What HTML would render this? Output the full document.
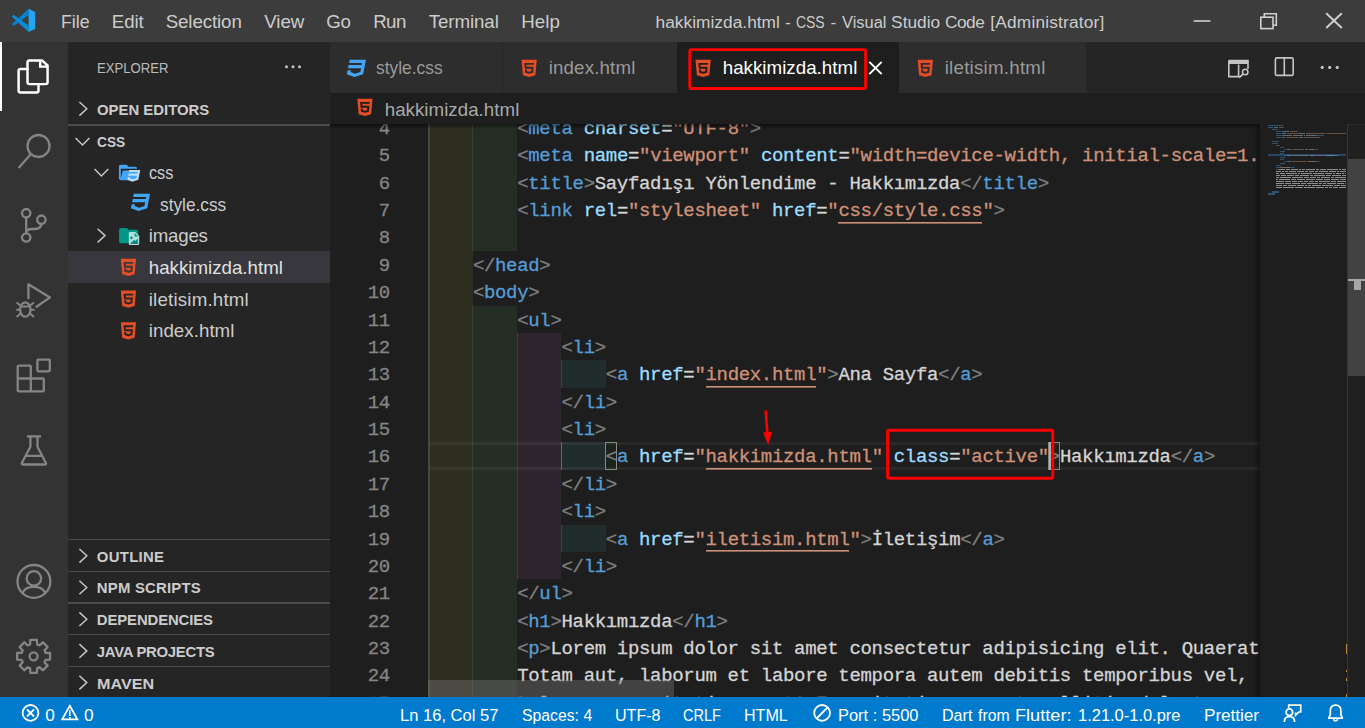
<!DOCTYPE html>
<html lang="tr">
<head>
<meta charset="UTF-8">
<title>hakkimizda.html - CSS - Visual Studio Code [Administrator]</title>
<style>
*{box-sizing:border-box;margin:0;padding:0}
html,body{width:1365px;height:728px;overflow:hidden;background:#1e1e1e}
body{position:relative;font-family:'Liberation Sans',sans-serif;-webkit-font-smoothing:antialiased}
.abs{position:absolute}
.t{position:absolute;white-space:pre;line-height:normal;z-index:8}
#titlebar{left:0;top:0;width:1365px;height:42px;background:#3c3c3c}
#activity{left:0;top:42px;width:68px;height:655px;background:#333333}
#sidebar{left:68px;top:42px;width:262px;height:655px;background:#252526}
#tabs{left:330px;top:42px;width:1035px;height:50.5px;background:#252526}
.tab{position:absolute;top:0;height:50.5px;background:#2d2d2d}
#crumbs{left:330px;top:92.5px;width:1035px;height:31.5px;background:#1e1e1e;z-index:3}
#editor{left:330px;top:124px;width:1035px;height:573px;background:#1e1e1e;overflow:hidden}
#codeclip{position:absolute;left:0;top:0;width:929.5px;height:573px;overflow:hidden}
#status{left:0;top:697px;width:1365px;height:31px;background:#007acc;z-index:6}
.sep{position:absolute;left:68px;width:262px;height:1.4px;background:#4b4b4b}
.ib{position:absolute}
.mm{position:absolute;height:1.5px}
.ln{position:absolute;left:0;width:59.8px;text-align:right;font:19px/27.37px 'Liberation Mono',monospace;letter-spacing:-0.327px;white-space:pre;-webkit-text-stroke:0.3px}
.cl{position:absolute;font:19px/27.37px 'Liberation Mono',monospace;letter-spacing:-0.327px;white-space:pre;height:27.37px;-webkit-text-stroke:0.3px;z-index:2}
.cl span{display:inline-block;height:27.37px;vertical-align:top}
.cl .u{background:linear-gradient(currentColor,currentColor) 0 23.5px/100% 1.6px no-repeat}
svg{position:absolute;overflow:visible}
</style>
</head>
<body>
<div id="titlebar" class="abs"></div>
<div id="activity" class="abs"></div>
<div id="sidebar" class="abs"></div>
<div class="abs" style="left:68px;top:251px;width:262px;height:32px;background:#37373d"></div>
<div class="abs" style="left:0;top:42.4px;width:2.4px;height:68.6px;background:#fff"></div>
<div class="sep" style="top:124.3px"></div>
<div class="sep" style="top:539px"></div>
<div class="sep" style="top:570.7px"></div>
<div class="sep" style="top:602.3px"></div>
<div class="sep" style="top:634px"></div>
<div class="sep" style="top:665.7px"></div>
<div id="tabs" class="abs">
  <div class="tab" style="left:0;width:172px"></div>
  <div class="tab" style="left:173px;width:173.5px"></div>
  <div class="tab" style="left:347px;width:221.5px;background:#1e1e1e"></div>
  <div class="tab" style="left:569px;width:186.5px"></div>
</div>
<div id="crumbs" class="abs"></div>
<div id="editor" class="abs">
 <div id="codeclip">
<div class="ib" style="left:98.60px;top:-9.95px;width:44.30px;height:602.14px;background:#2e2e20"></div>
<div class="ib" style="left:142.90px;top:-9.95px;width:44.30px;height:136.85px;background:#252e25"></div>
<div class="ib" style="left:142.90px;top:181.64px;width:44.30px;height:410.55px;background:#252e25"></div>
<div class="ib" style="left:187.20px;top:209.01px;width:44.30px;height:246.33px;background:#2e252e"></div>
<div class="ib" style="left:231.50px;top:236.38px;width:44.30px;height:27.37px;background:#212c2c"></div>
<div class="ib" style="left:231.50px;top:318.49px;width:44.30px;height:27.37px;background:#212c2c"></div>
<div class="ib" style="left:231.50px;top:400.60px;width:44.30px;height:27.37px;background:#212c2c"></div>
<div class="ib" style="left:97.90px;top:-9.95px;width:2px;height:602.14px;background:#46463b"></div>
<div class="ib" style="left:142.20px;top:-9.95px;width:1.3px;height:136.85px;background:#3c403a"></div>
<div class="ib" style="left:142.20px;top:181.64px;width:1.3px;height:410.55px;background:#3c403a"></div>
<div class="ib" style="left:186.50px;top:209.01px;width:1.3px;height:246.33px;background:#3c403a"></div>
<div class="ib" style="left:231.00px;top:236.38px;width:1px;height:27.37px;background:#3d4444"></div>
<div class="ib" style="left:231.00px;top:318.49px;width:1.4px;height:27.37px;background:#626a6a"></div>
<div class="ib" style="left:231.00px;top:400.60px;width:1px;height:27.37px;background:#3d4444"></div>
<div class="ib" style="left:98.60px;top:318.49px;width:840px;height:27.37px;border-top:3px solid rgba(255,255,255,0.05);border-bottom:3px solid rgba(255,255,255,0.05)"></div>
<div class="ib" style="left:275.30px;top:318.49px;width:11.77px;height:27.37px;border:1px solid #888888;background:rgba(0,100,0,0.1)"></div>
<div class="ib" style="left:718.30px;top:318.49px;width:11.77px;height:27.37px;border:1px solid #888888;background:rgba(0,100,0,0.1)"></div>
<div class="ib" style="left:718.50px;top:318.49px;width:2.6px;height:27.37px;background:#aeafad;z-index:3"></div>
<div class="ln" style="top:-8.00px;color:#858585">4</div>
<div class="cl" style="left:187.20px;top:-8.00px"><span style="color:#808080">&lt;</span><span style="color:#569cd6">meta</span><span style="color:#d4d4d4"> </span><span style="color:#9cdcfe">charset</span><span style="color:#d4d4d4">=</span><span style="color:#ce9178">&quot;</span><span style="color:#ce9178">UTF-8</span><span style="color:#ce9178">&quot;</span><span style="color:#808080">&gt;</span></div>
<div class="ln" style="top:19.37px;color:#858585">5</div>
<div class="cl" style="left:187.20px;top:19.37px"><span style="color:#808080">&lt;</span><span style="color:#569cd6">meta</span><span style="color:#d4d4d4"> </span><span style="color:#9cdcfe">name</span><span style="color:#d4d4d4">=</span><span style="color:#ce9178">&quot;</span><span style="color:#ce9178">viewport</span><span style="color:#ce9178">&quot;</span><span style="color:#d4d4d4"> </span><span style="color:#9cdcfe">content</span><span style="color:#d4d4d4">=</span><span style="color:#ce9178">&quot;</span><span style="color:#ce9178">width=device-width, initial-scale=1.0</span><span style="color:#ce9178">&quot;</span><span style="color:#808080">&gt;</span></div>
<div class="ln" style="top:46.74px;color:#858585">6</div>
<div class="cl" style="left:187.20px;top:46.74px"><span style="color:#808080">&lt;</span><span style="color:#569cd6">title</span><span style="color:#808080">&gt;</span><span style="color:#d4d4d4">Sayfadışı Yönlendime - Hakkımızda</span><span style="color:#808080">&lt;/</span><span style="color:#569cd6">title</span><span style="color:#808080">&gt;</span></div>
<div class="ln" style="top:74.11px;color:#858585">7</div>
<div class="cl" style="left:187.20px;top:74.11px"><span style="color:#808080">&lt;</span><span style="color:#569cd6">link</span><span style="color:#d4d4d4"> </span><span style="color:#9cdcfe">rel</span><span style="color:#d4d4d4">=</span><span style="color:#ce9178">&quot;</span><span style="color:#ce9178">stylesheet</span><span style="color:#ce9178">&quot;</span><span style="color:#d4d4d4"> </span><span style="color:#9cdcfe">href</span><span style="color:#d4d4d4">=</span><span style="color:#ce9178">&quot;</span><span class="u" style="color:#ce9178">css/style.css</span><span style="color:#ce9178">&quot;</span><span style="color:#808080">&gt;</span></div>
<div class="ln" style="top:101.48px;color:#858585">8</div>
<div class="ln" style="top:128.85px;color:#858585">9</div>
<div class="cl" style="left:142.90px;top:128.85px"><span style="color:#808080">&lt;/</span><span style="color:#569cd6">head</span><span style="color:#808080">&gt;</span></div>
<div class="ln" style="top:156.22px;color:#858585">10</div>
<div class="cl" style="left:142.90px;top:156.22px"><span style="color:#808080">&lt;</span><span style="color:#569cd6">body</span><span style="color:#808080">&gt;</span></div>
<div class="ln" style="top:183.59px;color:#858585">11</div>
<div class="cl" style="left:187.20px;top:183.59px"><span style="color:#808080">&lt;</span><span style="color:#569cd6">ul</span><span style="color:#808080">&gt;</span></div>
<div class="ln" style="top:210.96px;color:#858585">12</div>
<div class="cl" style="left:231.50px;top:210.96px"><span style="color:#808080">&lt;</span><span style="color:#569cd6">li</span><span style="color:#808080">&gt;</span></div>
<div class="ln" style="top:238.33px;color:#858585">13</div>
<div class="cl" style="left:275.80px;top:238.33px"><span style="color:#808080">&lt;</span><span style="color:#569cd6">a</span><span style="color:#d4d4d4"> </span><span style="color:#9cdcfe">href</span><span style="color:#d4d4d4">=</span><span style="color:#ce9178">&quot;</span><span class="u" style="color:#ce9178">index.html</span><span style="color:#ce9178">&quot;</span><span style="color:#808080">&gt;</span><span style="color:#d4d4d4">Ana Sayfa</span><span style="color:#808080">&lt;/</span><span style="color:#569cd6">a</span><span style="color:#808080">&gt;</span></div>
<div class="ln" style="top:265.70px;color:#858585">14</div>
<div class="cl" style="left:231.50px;top:265.70px"><span style="color:#808080">&lt;/</span><span style="color:#569cd6">li</span><span style="color:#808080">&gt;</span></div>
<div class="ln" style="top:293.07px;color:#858585">15</div>
<div class="cl" style="left:231.50px;top:293.07px"><span style="color:#808080">&lt;</span><span style="color:#569cd6">li</span><span style="color:#808080">&gt;</span></div>
<div class="ln" style="top:320.44px;color:#858585">16</div>
<div class="cl" style="left:275.80px;top:320.44px"><span style="color:#808080">&lt;</span><span style="color:#569cd6">a</span><span style="color:#d4d4d4"> </span><span style="color:#9cdcfe">href</span><span style="color:#d4d4d4">=</span><span style="color:#ce9178">&quot;</span><span class="u" style="color:#ce9178">hakkimizda.html</span><span style="color:#ce9178">&quot;</span><span style="color:#d4d4d4"> </span><span style="color:#9cdcfe">class</span><span style="color:#d4d4d4">=</span><span style="color:#ce9178">&quot;</span><span style="color:#ce9178">active</span><span style="color:#ce9178">&quot;</span><span style="color:#808080">&gt;</span><span style="color:#d4d4d4">Hakkımızda</span><span style="color:#808080">&lt;/</span><span style="color:#569cd6">a</span><span style="color:#808080">&gt;</span></div>
<div class="ln" style="top:347.81px;color:#858585">17</div>
<div class="cl" style="left:231.50px;top:347.81px"><span style="color:#808080">&lt;/</span><span style="color:#569cd6">li</span><span style="color:#808080">&gt;</span></div>
<div class="ln" style="top:375.18px;color:#858585">18</div>
<div class="cl" style="left:231.50px;top:375.18px"><span style="color:#808080">&lt;</span><span style="color:#569cd6">li</span><span style="color:#808080">&gt;</span></div>
<div class="ln" style="top:402.55px;color:#858585">19</div>
<div class="cl" style="left:275.80px;top:402.55px"><span style="color:#808080">&lt;</span><span style="color:#569cd6">a</span><span style="color:#d4d4d4"> </span><span style="color:#9cdcfe">href</span><span style="color:#d4d4d4">=</span><span style="color:#ce9178">&quot;</span><span class="u" style="color:#ce9178">iletisim.html</span><span style="color:#ce9178">&quot;</span><span style="color:#808080">&gt;</span><span style="color:#d4d4d4">İletişim</span><span style="color:#808080">&lt;/</span><span style="color:#569cd6">a</span><span style="color:#808080">&gt;</span></div>
<div class="ln" style="top:429.92px;color:#858585">20</div>
<div class="cl" style="left:231.50px;top:429.92px"><span style="color:#808080">&lt;/</span><span style="color:#569cd6">li</span><span style="color:#808080">&gt;</span></div>
<div class="ln" style="top:457.29px;color:#858585">21</div>
<div class="cl" style="left:187.20px;top:457.29px"><span style="color:#808080">&lt;/</span><span style="color:#569cd6">ul</span><span style="color:#808080">&gt;</span></div>
<div class="ln" style="top:484.66px;color:#858585">22</div>
<div class="cl" style="left:187.20px;top:484.66px"><span style="color:#808080">&lt;</span><span style="color:#569cd6">h1</span><span style="color:#808080">&gt;</span><span style="color:#d4d4d4">Hakkımızda</span><span style="color:#808080">&lt;/</span><span style="color:#569cd6">h1</span><span style="color:#808080">&gt;</span></div>
<div class="ln" style="top:512.03px;color:#858585">23</div>
<div class="cl" style="left:187.20px;top:512.03px"><span style="color:#808080">&lt;</span><span style="color:#569cd6">p</span><span style="color:#808080">&gt;</span><span style="color:#d4d4d4">Lorem ipsum dolor sit amet consectetur adipisicing elit. Quaerat</span></div>
<div class="ln" style="top:539.40px;color:#858585">24</div>
<div class="cl" style="left:187.20px;top:539.40px"><span style="color:#d4d4d4">Totam aut, laborum et labore tempora autem debitis temporibus vel,</span></div>
<div class="ln" style="top:566.77px;color:#858585">25</div>
<div class="cl" style="left:187.20px;top:566.77px"><span style="color:#d4d4d4">Dolorum exercitationem at! Exercitationem amet mollitia delectus</span></div>
 </div>
 <div class="abs" style="left:923.5px;top:0;width:6px;height:573px;background:linear-gradient(90deg,rgba(0,0,0,0),rgba(0,0,0,.38))"></div>
 <div class="abs" style="left:929.5px;top:0;width:87.5px;height:573px;background:#1e1e1e"></div>
 <div class="abs" style="left:938px;top:30.2px;width:78px;height:2.2px;background:#264f78;opacity:.85"></div>
<div class="mm" style="left:938.0px;top:0.50px;width:15.0px;background:#569cd6;opacity:0.42"></div>
<div class="mm" style="left:938.0px;top:2.52px;width:5.0px;background:#569cd6;opacity:0.42"></div>
<div class="mm" style="left:944.0px;top:2.52px;width:4.0px;background:#9cdcfe;opacity:0.42"></div>
<div class="mm" style="left:949.0px;top:2.52px;width:4.0px;background:#ce9178;opacity:0.42"></div>
<div class="mm" style="left:953.0px;top:2.52px;width:1.0px;background:#569cd6;opacity:0.42"></div>
<div class="mm" style="left:942.0px;top:4.53px;width:6.0px;background:#569cd6;opacity:0.42"></div>
<div class="mm" style="left:946.0px;top:6.54px;width:5.0px;background:#569cd6;opacity:0.42"></div>
<div class="mm" style="left:952.0px;top:6.54px;width:7.0px;background:#9cdcfe;opacity:0.42"></div>
<div class="mm" style="left:960.0px;top:6.54px;width:7.0px;background:#ce9178;opacity:0.42"></div>
<div class="mm" style="left:967.0px;top:6.54px;width:1.0px;background:#569cd6;opacity:0.42"></div>
<div class="mm" style="left:946.0px;top:8.56px;width:5.0px;background:#569cd6;opacity:0.42"></div>
<div class="mm" style="left:952.0px;top:8.56px;width:4.0px;background:#9cdcfe;opacity:0.42"></div>
<div class="mm" style="left:957.0px;top:8.56px;width:10.0px;background:#ce9178;opacity:0.42"></div>
<div class="mm" style="left:968.0px;top:8.56px;width:7.0px;background:#9cdcfe;opacity:0.42"></div>
<div class="mm" style="left:976.0px;top:8.56px;width:20.0px;background:#ce9178;opacity:0.42"></div>
<div class="mm" style="left:997.0px;top:8.56px;width:19.0px;background:#ce9178;opacity:0.42"></div>
<div class="mm" style="left:946.0px;top:10.57px;width:7.0px;background:#569cd6;opacity:0.42"></div>
<div class="mm" style="left:953.0px;top:10.57px;width:9.0px;background:#d4d4d4;opacity:0.42"></div>
<div class="mm" style="left:963.0px;top:10.57px;width:10.0px;background:#d4d4d4;opacity:0.42"></div>
<div class="mm" style="left:974.0px;top:10.57px;width:1.0px;background:#d4d4d4;opacity:0.42"></div>
<div class="mm" style="left:976.0px;top:10.57px;width:10.0px;background:#d4d4d4;opacity:0.42"></div>
<div class="mm" style="left:986.0px;top:10.57px;width:8.0px;background:#569cd6;opacity:0.42"></div>
<div class="mm" style="left:946.0px;top:12.59px;width:5.0px;background:#569cd6;opacity:0.42"></div>
<div class="mm" style="left:952.0px;top:12.59px;width:3.0px;background:#9cdcfe;opacity:0.42"></div>
<div class="mm" style="left:956.0px;top:12.59px;width:12.0px;background:#ce9178;opacity:0.42"></div>
<div class="mm" style="left:969.0px;top:12.59px;width:4.0px;background:#9cdcfe;opacity:0.42"></div>
<div class="mm" style="left:974.0px;top:12.59px;width:15.0px;background:#ce9178;opacity:0.42"></div>
<div class="mm" style="left:989.0px;top:12.59px;width:1.0px;background:#569cd6;opacity:0.42"></div>
<div class="mm" style="left:942.0px;top:16.62px;width:7.0px;background:#569cd6;opacity:0.42"></div>
<div class="mm" style="left:942.0px;top:18.63px;width:6.0px;background:#569cd6;opacity:0.42"></div>
<div class="mm" style="left:946.0px;top:20.65px;width:4.0px;background:#569cd6;opacity:0.42"></div>
<div class="mm" style="left:950.0px;top:22.66px;width:4.0px;background:#569cd6;opacity:0.42"></div>
<div class="mm" style="left:954.0px;top:24.68px;width:2.0px;background:#569cd6;opacity:0.42"></div>
<div class="mm" style="left:957.0px;top:24.68px;width:4.0px;background:#9cdcfe;opacity:0.42"></div>
<div class="mm" style="left:962.0px;top:24.68px;width:12.0px;background:#ce9178;opacity:0.42"></div>
<div class="mm" style="left:975.0px;top:24.68px;width:3.0px;background:#d4d4d4;opacity:0.42"></div>
<div class="mm" style="left:979.0px;top:24.68px;width:5.0px;background:#d4d4d4;opacity:0.42"></div>
<div class="mm" style="left:984.0px;top:24.68px;width:4.0px;background:#569cd6;opacity:0.42"></div>
<div class="mm" style="left:950.0px;top:26.69px;width:5.0px;background:#569cd6;opacity:0.42"></div>
<div class="mm" style="left:950.0px;top:28.71px;width:4.0px;background:#569cd6;opacity:0.42"></div>
<div class="mm" style="left:954.0px;top:30.72px;width:2.0px;background:#569cd6;opacity:0.42"></div>
<div class="mm" style="left:957.0px;top:30.72px;width:4.0px;background:#9cdcfe;opacity:0.42"></div>
<div class="mm" style="left:962.0px;top:30.72px;width:17.0px;background:#ce9178;opacity:0.42"></div>
<div class="mm" style="left:980.0px;top:30.72px;width:5.0px;background:#9cdcfe;opacity:0.42"></div>
<div class="mm" style="left:986.0px;top:30.72px;width:8.0px;background:#ce9178;opacity:0.42"></div>
<div class="mm" style="left:995.0px;top:30.72px;width:10.0px;background:#d4d4d4;opacity:0.42"></div>
<div class="mm" style="left:1005.0px;top:30.72px;width:4.0px;background:#569cd6;opacity:0.42"></div>
<div class="mm" style="left:950.0px;top:32.74px;width:5.0px;background:#569cd6;opacity:0.42"></div>
<div class="mm" style="left:950.0px;top:34.75px;width:4.0px;background:#569cd6;opacity:0.42"></div>
<div class="mm" style="left:954.0px;top:36.77px;width:2.0px;background:#569cd6;opacity:0.42"></div>
<div class="mm" style="left:957.0px;top:36.77px;width:4.0px;background:#9cdcfe;opacity:0.42"></div>
<div class="mm" style="left:962.0px;top:36.77px;width:15.0px;background:#ce9178;opacity:0.42"></div>
<div class="mm" style="left:978.0px;top:36.77px;width:8.0px;background:#d4d4d4;opacity:0.42"></div>
<div class="mm" style="left:986.0px;top:36.77px;width:4.0px;background:#569cd6;opacity:0.42"></div>
<div class="mm" style="left:950.0px;top:38.78px;width:5.0px;background:#569cd6;opacity:0.42"></div>
<div class="mm" style="left:946.0px;top:40.80px;width:5.0px;background:#569cd6;opacity:0.42"></div>
<div class="mm" style="left:946.0px;top:42.81px;width:4.0px;background:#569cd6;opacity:0.42"></div>
<div class="mm" style="left:950.0px;top:42.81px;width:10.0px;background:#d4d4d4;opacity:0.42"></div>
<div class="mm" style="left:960.0px;top:42.81px;width:5.0px;background:#569cd6;opacity:0.42"></div>
<div class="mm" style="left:946.0px;top:44.83px;width:3.0px;background:#569cd6;opacity:0.42"></div>
<div class="mm" style="left:949.0px;top:44.83px;width:6.0px;background:#d4d4d4;opacity:0.62"></div>
<div class="mm" style="left:956.0px;top:44.83px;width:4.0px;background:#d4d4d4;opacity:0.62"></div>
<div class="mm" style="left:961.0px;top:44.83px;width:7.0px;background:#d4d4d4;opacity:0.62"></div>
<div class="mm" style="left:969.0px;top:44.83px;width:2.0px;background:#d4d4d4;opacity:0.62"></div>
<div class="mm" style="left:972.0px;top:44.83px;width:3.0px;background:#d4d4d4;opacity:0.62"></div>
<div class="mm" style="left:976.0px;top:44.83px;width:9.0px;background:#d4d4d4;opacity:0.62"></div>
<div class="mm" style="left:986.0px;top:44.83px;width:3.0px;background:#d4d4d4;opacity:0.62"></div>
<div class="mm" style="left:990.0px;top:44.83px;width:6.0px;background:#d4d4d4;opacity:0.62"></div>
<div class="mm" style="left:997.0px;top:44.83px;width:11.0px;background:#d4d4d4;opacity:0.62"></div>
<div class="mm" style="left:1009.0px;top:44.83px;width:2.0px;background:#d4d4d4;opacity:0.62"></div>
<div class="mm" style="left:1012.0px;top:44.83px;width:4.0px;background:#d4d4d4;opacity:0.62"></div>
<div class="mm" style="left:946.0px;top:46.84px;width:5.0px;background:#d4d4d4;opacity:0.62"></div>
<div class="mm" style="left:952.0px;top:46.84px;width:2.0px;background:#d4d4d4;opacity:0.62"></div>
<div class="mm" style="left:955.0px;top:46.84px;width:3.0px;background:#d4d4d4;opacity:0.62"></div>
<div class="mm" style="left:959.0px;top:46.84px;width:7.0px;background:#d4d4d4;opacity:0.62"></div>
<div class="mm" style="left:967.0px;top:46.84px;width:7.0px;background:#d4d4d4;opacity:0.62"></div>
<div class="mm" style="left:975.0px;top:46.84px;width:3.0px;background:#d4d4d4;opacity:0.62"></div>
<div class="mm" style="left:979.0px;top:46.84px;width:5.0px;background:#d4d4d4;opacity:0.62"></div>
<div class="mm" style="left:985.0px;top:46.84px;width:3.0px;background:#d4d4d4;opacity:0.62"></div>
<div class="mm" style="left:989.0px;top:46.84px;width:9.0px;background:#d4d4d4;opacity:0.62"></div>
<div class="mm" style="left:999.0px;top:46.84px;width:7.0px;background:#d4d4d4;opacity:0.62"></div>
<div class="mm" style="left:1007.0px;top:46.84px;width:2.0px;background:#d4d4d4;opacity:0.62"></div>
<div class="mm" style="left:1010.0px;top:46.84px;width:6.0px;background:#d4d4d4;opacity:0.62"></div>
<div class="mm" style="left:946.0px;top:48.86px;width:3.0px;background:#d4d4d4;opacity:0.62"></div>
<div class="mm" style="left:950.0px;top:48.86px;width:5.0px;background:#d4d4d4;opacity:0.62"></div>
<div class="mm" style="left:956.0px;top:48.86px;width:11.0px;background:#d4d4d4;opacity:0.62"></div>
<div class="mm" style="left:968.0px;top:48.86px;width:2.0px;background:#d4d4d4;opacity:0.62"></div>
<div class="mm" style="left:971.0px;top:48.86px;width:11.0px;background:#d4d4d4;opacity:0.62"></div>
<div class="mm" style="left:983.0px;top:48.86px;width:11.0px;background:#d4d4d4;opacity:0.62"></div>
<div class="mm" style="left:995.0px;top:48.86px;width:7.0px;background:#d4d4d4;opacity:0.62"></div>
<div class="mm" style="left:1003.0px;top:48.86px;width:2.0px;background:#d4d4d4;opacity:0.62"></div>
<div class="mm" style="left:1006.0px;top:48.86px;width:5.0px;background:#d4d4d4;opacity:0.62"></div>
<div class="mm" style="left:1012.0px;top:48.86px;width:2.0px;background:#d4d4d4;opacity:0.62"></div>
<div class="mm" style="left:1015.0px;top:48.86px;width:1.0px;background:#d4d4d4;opacity:0.62"></div>
<div class="mm" style="left:946.0px;top:50.88px;width:4.0px;background:#d4d4d4;opacity:0.62"></div>
<div class="mm" style="left:951.0px;top:50.88px;width:5.0px;background:#d4d4d4;opacity:0.62"></div>
<div class="mm" style="left:957.0px;top:50.88px;width:7.0px;background:#d4d4d4;opacity:0.62"></div>
<div class="mm" style="left:965.0px;top:50.88px;width:4.0px;background:#d4d4d4;opacity:0.62"></div>
<div class="mm" style="left:970.0px;top:50.88px;width:9.0px;background:#d4d4d4;opacity:0.62"></div>
<div class="mm" style="left:980.0px;top:50.88px;width:3.0px;background:#d4d4d4;opacity:0.62"></div>
<div class="mm" style="left:984.0px;top:50.88px;width:11.0px;background:#d4d4d4;opacity:0.62"></div>
<div class="mm" style="left:996.0px;top:50.88px;width:5.0px;background:#d4d4d4;opacity:0.62"></div>
<div class="mm" style="left:1002.0px;top:50.88px;width:9.0px;background:#d4d4d4;opacity:0.62"></div>
<div class="mm" style="left:1012.0px;top:50.88px;width:4.0px;background:#d4d4d4;opacity:0.62"></div>
<div class="mm" style="left:946.0px;top:52.89px;width:3.0px;background:#d4d4d4;opacity:0.62"></div>
<div class="mm" style="left:950.0px;top:52.89px;width:11.0px;background:#d4d4d4;opacity:0.62"></div>
<div class="mm" style="left:962.0px;top:52.89px;width:11.0px;background:#d4d4d4;opacity:0.62"></div>
<div class="mm" style="left:974.0px;top:52.89px;width:5.0px;background:#d4d4d4;opacity:0.62"></div>
<div class="mm" style="left:980.0px;top:52.89px;width:6.0px;background:#d4d4d4;opacity:0.62"></div>
<div class="mm" style="left:987.0px;top:52.89px;width:3.0px;background:#d4d4d4;opacity:0.62"></div>
<div class="mm" style="left:991.0px;top:52.89px;width:9.0px;background:#d4d4d4;opacity:0.62"></div>
<div class="mm" style="left:1001.0px;top:52.89px;width:3.0px;background:#d4d4d4;opacity:0.62"></div>
<div class="mm" style="left:1005.0px;top:52.89px;width:11.0px;background:#d4d4d4;opacity:0.62"></div>
<div class="mm" style="left:946.0px;top:54.91px;width:2.0px;background:#d4d4d4;opacity:0.62"></div>
<div class="mm" style="left:949.0px;top:54.91px;width:11.0px;background:#d4d4d4;opacity:0.62"></div>
<div class="mm" style="left:961.0px;top:54.91px;width:5.0px;background:#d4d4d4;opacity:0.62"></div>
<div class="mm" style="left:967.0px;top:54.91px;width:8.0px;background:#d4d4d4;opacity:0.62"></div>
<div class="mm" style="left:976.0px;top:54.91px;width:9.0px;background:#d4d4d4;opacity:0.62"></div>
<div class="mm" style="left:986.0px;top:54.91px;width:7.0px;background:#d4d4d4;opacity:0.62"></div>
<div class="mm" style="left:994.0px;top:54.91px;width:6.0px;background:#d4d4d4;opacity:0.62"></div>
<div class="mm" style="left:1001.0px;top:54.91px;width:8.0px;background:#d4d4d4;opacity:0.62"></div>
<div class="mm" style="left:1010.0px;top:54.91px;width:6.0px;background:#d4d4d4;opacity:0.62"></div>
<div class="mm" style="left:946.0px;top:56.92px;width:8.0px;background:#d4d4d4;opacity:0.62"></div>
<div class="mm" style="left:955.0px;top:56.92px;width:6.0px;background:#d4d4d4;opacity:0.62"></div>
<div class="mm" style="left:962.0px;top:56.92px;width:5.0px;background:#d4d4d4;opacity:0.62"></div>
<div class="mm" style="left:968.0px;top:56.92px;width:5.0px;background:#d4d4d4;opacity:0.62"></div>
<div class="mm" style="left:974.0px;top:56.92px;width:4.0px;background:#d4d4d4;opacity:0.62"></div>
<div class="mm" style="left:979.0px;top:56.92px;width:5.0px;background:#d4d4d4;opacity:0.62"></div>
<div class="mm" style="left:985.0px;top:56.92px;width:3.0px;background:#d4d4d4;opacity:0.62"></div>
<div class="mm" style="left:989.0px;top:56.92px;width:11.0px;background:#d4d4d4;opacity:0.62"></div>
<div class="mm" style="left:1001.0px;top:56.92px;width:5.0px;background:#d4d4d4;opacity:0.62"></div>
<div class="mm" style="left:1007.0px;top:56.92px;width:9.0px;background:#d4d4d4;opacity:0.62"></div>
<div class="mm" style="left:946.0px;top:58.94px;width:8.0px;background:#d4d4d4;opacity:0.62"></div>
<div class="mm" style="left:955.0px;top:58.94px;width:6.0px;background:#d4d4d4;opacity:0.62"></div>
<div class="mm" style="left:962.0px;top:58.94px;width:8.0px;background:#d4d4d4;opacity:0.62"></div>
<div class="mm" style="left:971.0px;top:58.94px;width:5.0px;background:#d4d4d4;opacity:0.62"></div>
<div class="mm" style="left:977.0px;top:58.94px;width:11.0px;background:#d4d4d4;opacity:0.62"></div>
<div class="mm" style="left:989.0px;top:58.94px;width:3.0px;background:#d4d4d4;opacity:0.62"></div>
<div class="mm" style="left:993.0px;top:58.94px;width:3.0px;background:#d4d4d4;opacity:0.62"></div>
<div class="mm" style="left:997.0px;top:58.94px;width:9.0px;background:#d4d4d4;opacity:0.62"></div>
<div class="mm" style="left:1007.0px;top:58.94px;width:7.0px;background:#d4d4d4;opacity:0.62"></div>
<div class="mm" style="left:1015.0px;top:58.94px;width:1.0px;background:#d4d4d4;opacity:0.62"></div>
<div class="mm" style="left:946.0px;top:60.95px;width:6.0px;background:#d4d4d4;opacity:0.62"></div>
<div class="mm" style="left:953.0px;top:60.95px;width:4.0px;background:#d4d4d4;opacity:0.62"></div>
<div class="mm" style="left:958.0px;top:60.95px;width:8.0px;background:#d4d4d4;opacity:0.62"></div>
<div class="mm" style="left:967.0px;top:60.95px;width:7.0px;background:#d4d4d4;opacity:0.62"></div>
<div class="mm" style="left:975.0px;top:60.95px;width:2.0px;background:#d4d4d4;opacity:0.62"></div>
<div class="mm" style="left:978.0px;top:60.95px;width:3.0px;background:#d4d4d4;opacity:0.62"></div>
<div class="mm" style="left:982.0px;top:60.95px;width:9.0px;background:#d4d4d4;opacity:0.62"></div>
<div class="mm" style="left:992.0px;top:60.95px;width:11.0px;background:#d4d4d4;opacity:0.62"></div>
<div class="mm" style="left:1004.0px;top:60.95px;width:6.0px;background:#d4d4d4;opacity:0.62"></div>
<div class="mm" style="left:1011.0px;top:60.95px;width:5.0px;background:#d4d4d4;opacity:0.62"></div>
<div class="mm" style="left:946.0px;top:62.97px;width:6.0px;background:#d4d4d4;opacity:0.62"></div>
<div class="mm" style="left:953.0px;top:62.97px;width:11.0px;background:#d4d4d4;opacity:0.62"></div>
<div class="mm" style="left:965.0px;top:62.97px;width:8.0px;background:#d4d4d4;opacity:0.62"></div>
<div class="mm" style="left:974.0px;top:62.97px;width:11.0px;background:#d4d4d4;opacity:0.62"></div>
<div class="mm" style="left:986.0px;top:62.97px;width:8.0px;background:#d4d4d4;opacity:0.62"></div>
<div class="mm" style="left:995.0px;top:62.97px;width:3.0px;background:#d4d4d4;opacity:0.62"></div>
<div class="mm" style="left:999.0px;top:62.97px;width:3.0px;background:#d4d4d4;opacity:0.62"></div>
<div class="mm" style="left:1003.0px;top:62.97px;width:5.0px;background:#d4d4d4;opacity:0.62"></div>
<div class="mm" style="left:1009.0px;top:62.97px;width:7.0px;background:#d4d4d4;opacity:0.62"></div>
<div class="mm" style="left:942.0px;top:67.00px;width:7.0px;background:#569cd6;opacity:0.42"></div>
<div class="mm" style="left:938.0px;top:69.01px;width:7.0px;background:#569cd6;opacity:0.42"></div>
 <div class="abs" style="left:1017px;top:0;width:18px;height:573px;background:#202020;border-left:1px solid #363636;border-top:1px solid #2c2c2c"></div>
 <div class="abs" style="left:1017.5px;top:34.5px;width:17.5px;height:217.5px;background:#424242"></div>
 <div class="abs" style="left:1017.5px;top:154.8px;width:17.5px;height:2px;background:#a6a6a6"></div>
 <div class="abs" style="left:1023.7px;top:155px;width:7.7px;height:11px;background:#a6a6a6"></div>
 <div class="abs" style="left:1016px;top:520px;width:1.2px;height:9.6px;background:#b98a45"></div>
 <div class="abs" style="left:1016px;top:546px;width:1.2px;height:2px;background:#b98a45"></div>
 <div class="abs" style="left:1016px;top:554px;width:1.2px;height:3px;background:#b98a45"></div>
 <div class="abs" style="left:1016px;top:570px;width:1.2px;height:3px;background:#b98a45"></div>
 <div class="abs" style="left:98.3px;top:556px;width:245.7px;height:17px;background:rgba(121,121,121,.4);z-index:4"></div>
 <div class="abs" style="left:0;top:0;width:929.5px;height:5px;background:linear-gradient(180deg,rgba(0,0,0,.5),rgba(0,0,0,0));z-index:4"></div>
</div>
<div id="status" class="abs"></div>
<svg width="1365" height="728" viewBox="0 0 1365 728" style="left:0;top:0;z-index:7">
<polygon points="11.80,24.31 28.55,8.70 28.55,15.35 13.81,26.02" fill="#0380d0"/>
<polygon points="11.80,16.49 13.81,14.78 28.55,25.45 28.55,32.10" fill="#0a8ad8"/>
<polygon points="28.55,8.70 35.20,11.88 35.20,28.92 28.55,32.10" fill="#22a6f2"/>
<g stroke="#d0d0d0" stroke-width="1.6" fill="none">
<path d="M1193.6 21 H1210.4"/>
<rect x="1260.8" y="17.2" width="12.2" height="11.4"/>
<path d="M1264.3 17.2 V13.7 H1276.3 V25.3 H1273"/>
<path d="M1326.2 13.2 L1341.8 28 M1341.8 13.2 L1326.2 28" stroke-width="1.9"/>
</g>
<g stroke="#ffffff" stroke-width="2.45" fill="none" stroke-linejoin="round" stroke-linecap="round">
<path d="M27.5 62.4 Q27.5 60.4 29.5 60.4 H42 L47.6 65.5 V82.1 Q47.6 84.1 45.6 84.1 H29.5 Q27.5 84.1 27.5 82.1 Z"/>
<path d="M40.2 60.4 V66.6 H47.6" stroke-linecap="butt" stroke-linejoin="miter"/>
<path d="M27.5 69 H20.6 Q18.6 69 18.6 71 V90.4 Q18.6 92.4 20.6 92.4 H36.5 Q38.5 92.4 38.5 90.4 V84.1"/>
</g>
<g stroke="#858585" stroke-width="2.3" fill="none" stroke-linejoin="round">
<circle cx="38.5" cy="146" r="11"/><path d="M30.9 154 L18.6 168"/>
<circle cx="26.2" cy="213.2" r="4.2"/><circle cx="41.4" cy="219.7" r="4.2"/><circle cx="26.2" cy="237.5" r="4.2"/>
<path d="M26.2 217.4 V233.3 M41.4 223.9 Q41 229 35 229 H31.5 Q26.6 229 26.3 233.3"/>
<path d="M28.4 299 V284.3 L50 297.4 L35.8 307.2"/>
<ellipse cx="25.3" cy="309.5" rx="5.2" ry="7.2"/>
<path d="M20 306.6 H30.6 M16.6 302.5 L20.4 305.5 M34 302.5 L30.2 305.5 M16.2 309.8 H20 M30.6 309.8 H34.6 M16.6 317 L20.6 313.6 M34 317 L30 313.6" stroke-width="2"/>
<path d="M17.7 366.6 Q17.7 365.6 18.7 365.6 H29.8 Q30.8 365.6 30.8 366.6 V378.5 H42.8 Q43.8 378.5 43.8 379.5 V390.4 Q43.8 391.4 42.8 391.4 H18.7 Q17.7 391.4 17.7 390.4 Z M30.8 378.5 V391.4 M17.7 378.5 H30.8"/>
<rect x="37.4" y="359.6" width="12.4" height="11.7" rx="1"/>
<path d="M27 436.4 H41 M30.4 436.4 V446.8 L21.8 463 Q21.2 464.5 23 464.5 H44.8 Q46.6 464.5 45.9 463 L37.5 446.8 V436.4 M26.4 455.8 H41.6"/>
<circle cx="33.9" cy="581.4" r="16.4"/><circle cx="33.9" cy="578.4" r="7.2"/><path d="M22.4 593.6 Q24.6 586.9 33.9 586.9 Q43.2 586.9 45.4 593.6"/>
<path d="M30.05 644.42 L30.32 639.82 L36.88 639.82 L37.15 644.42 L39.49 645.39 L42.93 642.33 L47.57 646.97 L44.51 650.41 L45.48 652.75 L50.08 653.02 L50.08 659.58 L45.48 659.85 L44.51 662.19 L47.57 665.63 L42.93 670.27 L39.49 667.21 L37.15 668.18 L36.88 672.78 L30.32 672.78 L30.05 668.18 L27.71 667.21 L24.27 670.27 L19.63 665.63 L22.69 662.19 L21.72 659.85 L17.12 659.58 L17.12 653.02 L21.72 652.75 L22.69 650.41 L19.63 646.97 L24.27 642.33 L27.71 645.39 Z"/>
<circle cx="33.6" cy="656.3" r="4"/>
</g>
<g stroke="#c5c5c5" stroke-width="1.5" fill="none">
<path d="M79.4 102.0 L86.8 108.8 L79.4 115.6"/>
<path d="M75.6 138.0 L82.5 145.0 L89.4 138.0"/>
<path d="M94.5 169.0 L101.4 176.0 L108.3 169.0"/>
<path d="M97.6 228.8 L105.0 235.6 L97.6 242.4"/>
<path d="M79.4 549.0 L86.8 555.8 L79.4 562.6"/>
<path d="M79.4 580.7 L86.8 587.5 L79.4 594.3"/>
<path d="M79.4 612.4 L86.8 619.2 L79.4 626.0"/>
<path d="M79.4 644.1 L86.8 650.9 L79.4 657.7"/>
<path d="M79.4 675.8 L86.8 682.6 L79.4 689.4"/>
</g>
<circle cx="286.5" cy="66.8" r="1.5" fill="#c5c5c5"/>
<circle cx="293" cy="66.8" r="1.5" fill="#c5c5c5"/>
<circle cx="299.5" cy="66.8" r="1.5" fill="#c5c5c5"/>
<path transform="translate(117.00 161.00) scale(0.96)" d="M19,20H4C2.89,20 2,19.1 2,18V6C2,4.89 2.89,4 4,4H10L12,6H19A2,2 0 0,1 21,8H21L4,8V18L6.14,10H23.21L20.93,18.5C20.7,19.37 19.92,20 19,20Z" fill="#42a5f5" fill-rule="evenodd"/>
<path transform="translate(126.00 168.00) scale(0.65)" d="M5,3L4.35,6.34H17.94L17.5,8.5H3.92L3.26,11.83H16.85L16.09,15.64L10.61,17.45L5.86,15.64L6.19,14H2.85L2.06,18L9.91,21L18.96,18L20.16,11.97L20.4,10.76L21.94,3H5Z" fill="#bbdefb" fill-rule="evenodd"/>
<path transform="translate(129.00 190.90) scale(0.96)" d="M5,3L4.35,6.34H17.94L17.5,8.5H3.92L3.26,11.83H16.85L16.09,15.64L10.61,17.45L5.86,15.64L6.19,14H2.85L2.06,18L9.91,21L18.96,18L20.16,11.97L20.4,10.76L21.94,3H5Z" fill="#42a5f5" fill-rule="evenodd"/>
<path transform="translate(117.10 224.10) scale(0.96)" d="M10,4H4C2.89,4 2,4.89 2,6V18A2,2 0 0,0 4,20H20A2,2 0 0,0 22,18V8C22,6.89 21.1,6 20,6H12L10,4Z" fill="#009688" fill-rule="evenodd"/>
<path transform="translate(126.20 230.70) scale(0.65)" d="M13,9H18.5L13,3.5V9M6,2H14L20,8V20A2,2 0 0,1 18,22H6C4.89,22 4,21.1 4,20V4C4,2.89 4.89,2 6,2M6,20H15L18,20V12L14,16L12,14L6,20M8,9A2,2 0 0,0 6,11A2,2 0 0,0 8,13A2,2 0 0,0 10,11A2,2 0 0,0 8,9Z" fill="#b2dfdb" fill-rule="evenodd"/>
<path transform="translate(116.90 255.90) scale(0.96)" d="M12,17.56L16.07,16.43L16.62,10.33H9.38L9.2,8.3H16.8L17,6.31H7L7.56,12.32H14.45L14.22,14.9L12,15.5L9.78,14.9L9.64,13.24H7.64L7.93,16.43L12,17.56M4.07,3H19.93L18.5,19.2L12,21L5.5,19.2L4.07,3Z" fill="#e44d26" fill-rule="evenodd"/>
<path transform="translate(116.90 287.60) scale(0.96)" d="M12,17.56L16.07,16.43L16.62,10.33H9.38L9.2,8.3H16.8L17,6.31H7L7.56,12.32H14.45L14.22,14.9L12,15.5L9.78,14.9L9.64,13.24H7.64L7.93,16.43L12,17.56M4.07,3H19.93L18.5,19.2L12,21L5.5,19.2L4.07,3Z" fill="#e44d26" fill-rule="evenodd"/>
<path transform="translate(116.90 319.30) scale(0.96)" d="M12,17.56L16.07,16.43L16.62,10.33H9.38L9.2,8.3H16.8L17,6.31H7L7.56,12.32H14.45L14.22,14.9L12,15.5L9.78,14.9L9.64,13.24H7.64L7.93,16.43L12,17.56M4.07,3H19.93L18.5,19.2L12,21L5.5,19.2L4.07,3Z" fill="#e44d26" fill-rule="evenodd"/>
<path transform="translate(344.90 56.90) scale(0.96)" d="M5,3L4.35,6.34H17.94L17.5,8.5H3.92L3.26,11.83H16.85L16.09,15.64L10.61,17.45L5.86,15.64L6.19,14H2.85L2.06,18L9.91,21L18.96,18L20.16,11.97L20.4,10.76L21.94,3H5Z" fill="#42a5f5" fill-rule="evenodd"/>
<path transform="translate(517.60 56.90) scale(0.96)" d="M12,17.56L16.07,16.43L16.62,10.33H9.38L9.2,8.3H16.8L17,6.31H7L7.56,12.32H14.45L14.22,14.9L12,15.5L9.78,14.9L9.64,13.24H7.64L7.93,16.43L12,17.56M4.07,3H19.93L18.5,19.2L12,21L5.5,19.2L4.07,3Z" fill="#e44d26" fill-rule="evenodd"/>
<path transform="translate(691.60 56.90) scale(0.96)" d="M12,17.56L16.07,16.43L16.62,10.33H9.38L9.2,8.3H16.8L17,6.31H7L7.56,12.32H14.45L14.22,14.9L12,15.5L9.78,14.9L9.64,13.24H7.64L7.93,16.43L12,17.56M4.07,3H19.93L18.5,19.2L12,21L5.5,19.2L4.07,3Z" fill="#e44d26" fill-rule="evenodd"/>
<path transform="translate(913.80 56.90) scale(0.96)" d="M12,17.56L16.07,16.43L16.62,10.33H9.38L9.2,8.3H16.8L17,6.31H7L7.56,12.32H14.45L14.22,14.9L12,15.5L9.78,14.9L9.64,13.24H7.64L7.93,16.43L12,17.56M4.07,3H19.93L18.5,19.2L12,21L5.5,19.2L4.07,3Z" fill="#e44d26" fill-rule="evenodd"/>
<path transform="translate(353.40 95.90) scale(0.96)" d="M12,17.56L16.07,16.43L16.62,10.33H9.38L9.2,8.3H16.8L17,6.31H7L7.56,12.32H14.45L14.22,14.9L12,15.5L9.78,14.9L9.64,13.24H7.64L7.93,16.43L12,17.56M4.07,3H19.93L18.5,19.2L12,21L5.5,19.2L4.07,3Z" fill="#e44d26" fill-rule="evenodd"/>
<path d="M869.3 61.9 L881.7 74.1 M881.7 61.9 L869.3 74.1" stroke="#ffffff" stroke-width="2" fill="none"/>
<g stroke="#c5c5c5" stroke-width="1.6" fill="none">
<path d="M1228.8 60.6 H1248 V69 M1228.8 60.6 V76.6 H1239.5 M1238.6 64.4 V76.6"/><path d="M1228.8 62.3 H1248" stroke-width="3.4"/>
<circle cx="1245.2" cy="72" r="2.7"/><path d="M1243 74.2 L1239.2 77.6" stroke-width="1.8"/>
<rect x="1275.4" y="57.9" width="17.8" height="17.5" rx="1.5"/><path d="M1284.3 57.9 V75.4"/>
</g>
<circle cx="1322.2" cy="67.4" r="1.6" fill="#c5c5c5"/>
<circle cx="1329.7" cy="67.4" r="1.6" fill="#c5c5c5"/>
<circle cx="1337.2" cy="67.4" r="1.6" fill="#c5c5c5"/>
<g stroke="#ffffff" stroke-width="1.8" fill="none">
<circle cx="30.5" cy="712.9" r="7.9"/><path d="M26.9 709.3 L34.1 716.5 M34.1 709.3 L26.9 716.5"/>
<path d="M69.8 705.8 L77.4 719.4 H62.2 Z" stroke-linejoin="miter"/><path d="M69.8 710.2 V716 M69.8 717 V718.5" stroke-width="1.7"/>
<circle cx="822.1" cy="712.9" r="7.9"/><path d="M816.5 718.5 L827.7 707.3"/>
<path d="M1288.7 708 V705.1 H1300.7 V712 H1298.8 L1295.6 715.2 V712.6" stroke-width="1.7"/>
<circle cx="1289.4" cy="712.2" r="3.3" stroke-width="1.7"/><path d="M1284.3 722 Q1284.3 716.7 1289.4 716.7 Q1294.6 716.7 1294.6 722" stroke-width="1.7"/>
<path d="M1328.8 718.2 L1330.3 714.6 V711 Q1330.3 705.1 1335.6 705.1 Q1340.9 705.1 1340.9 711 V714.6 L1342.4 718.2 Z" stroke-linejoin="round" stroke-width="1.7"/><path d="M1333.3 719.2 Q1335.6 722.6 1337.9 719.2" stroke-width="1.6"/>
</g>
<rect x="689.7" y="49.7" width="175.8" height="38.8" rx="1.5" fill="none" stroke="#fe0000" stroke-width="2.8"/>
<rect x="887.6" y="430.3" width="165.2" height="48" rx="1.5" fill="none" stroke="#fe0000" stroke-width="2.9"/>
<path d="M765.7 410.3 L767.4 434" stroke="#fe0000" stroke-width="2.6" fill="none"/><path d="M763.1 432.5 L772.1 431.7 L768.2 445 Z" fill="#fe0000"/>
</svg>
<div class="t" style="left:60.69px;top:10.86px;font-size:18.72px;font-weight:normal;color:#cccccc;transform:scaleX(0.9497);transform-origin:0 0">File</div>
<div class="t" style="left:111.69px;top:10.86px;font-size:18.72px;font-weight:normal;color:#cccccc;letter-spacing:-0.037px">Edit</div>
<div class="t" style="left:165.69px;top:10.86px;font-size:18.72px;font-weight:normal;color:#cccccc;letter-spacing:-0.104px">Selection</div>
<div class="t" style="left:264.19px;top:10.86px;font-size:18.72px;font-weight:normal;color:#cccccc;letter-spacing:-0.026px">View</div>
<div class="t" style="left:326.19px;top:10.86px;font-size:18.72px;font-weight:normal;color:#cccccc;letter-spacing:-0.329px">Go</div>
<div class="t" style="left:373.19px;top:10.86px;font-size:18.72px;font-weight:normal;color:#cccccc;letter-spacing:-0.594px">Run</div>
<div class="t" style="left:428.69px;top:10.86px;font-size:18.72px;font-weight:normal;color:#cccccc;letter-spacing:-0.080px">Terminal</div>
<div class="t" style="left:521.19px;top:10.86px;font-size:18.72px;font-weight:normal;color:#cccccc;letter-spacing:0.052px">Help</div>
<div class="t" style="left:655.51px;top:12.14px;font-size:17.3px;font-weight:normal;color:#cccccc;letter-spacing:0.035px">hakkimizda.html</div>
<div class="t" style="left:784.91px;top:12.14px;font-size:17.3px;font-weight:normal;color:#cccccc;">-</div>
<div class="t" style="left:796.21px;top:12.14px;font-size:17.3px;font-weight:normal;color:#cccccc;transform:scaleX(0.8067);transform-origin:0 0">CSS</div>
<div class="t" style="left:830.61px;top:12.14px;font-size:17.3px;font-weight:normal;color:#cccccc;">-</div>
<div class="t" style="left:841.91px;top:12.14px;font-size:17.3px;font-weight:normal;color:#cccccc;transform:scaleX(0.9511);transform-origin:0 0">Visual</div>
<div class="t" style="left:891.11px;top:12.14px;font-size:17.3px;font-weight:normal;color:#cccccc;letter-spacing:0.012px">Studio</div>
<div class="t" style="left:944.91px;top:12.14px;font-size:17.3px;font-weight:normal;color:#cccccc;letter-spacing:-0.450px">Code</div>
<div class="t" style="left:990.31px;top:12.14px;font-size:17.3px;font-weight:normal;color:#cccccc;letter-spacing:0.191px">[Administrator]</div>
<div class="t" style="left:97.26px;top:59.79px;font-size:14.6px;font-weight:normal;color:#bbbbbb;transform:scaleX(0.8994);transform-origin:0 0">EXPLORER</div>
<div class="t" style="left:97.05px;top:101.72px;font-size:14.9px;font-weight:bold;color:#cccccc;letter-spacing:-0.006px">OPEN EDITORS</div>
<div class="t" style="left:97.05px;top:133.82px;font-size:14.9px;font-weight:bold;color:#cccccc;transform:scaleX(0.9207);transform-origin:0 0">CSS</div>
<div class="t" style="left:148.79px;top:161.76px;font-size:18.72px;font-weight:normal;color:#cccccc;transform:scaleX(0.8668);transform-origin:0 0">css</div>
<div class="t" style="left:160.29px;top:193.56px;font-size:18.72px;font-weight:normal;color:#cccccc;transform:scaleX(0.9234);transform-origin:0 0">style.css</div>
<div class="t" style="left:148.79px;top:224.96px;font-size:18.72px;font-weight:normal;color:#cccccc;letter-spacing:-0.235px">images</div>
<div class="t" style="left:148.79px;top:256.76px;font-size:18.72px;font-weight:normal;color:#e0e0e0;letter-spacing:0.002px">hakkimizda.html</div>
<div class="t" style="left:148.79px;top:288.56px;font-size:18.72px;font-weight:normal;color:#cccccc;letter-spacing:0.186px">iletisim.html</div>
<div class="t" style="left:148.79px;top:320.16px;font-size:18.72px;font-weight:normal;color:#cccccc;letter-spacing:0.042px">index.html</div>
<div class="t" style="left:96.85px;top:548.62px;font-size:14.9px;font-weight:bold;color:#cccccc;letter-spacing:0.306px">OUTLINE</div>
<div class="t" style="left:96.85px;top:580.42px;font-size:14.9px;font-weight:bold;color:#cccccc;letter-spacing:0.213px">NPM SCRIPTS</div>
<div class="t" style="left:96.85px;top:612.02px;font-size:14.9px;font-weight:bold;color:#cccccc;letter-spacing:-0.128px">DEPENDENCIES</div>
<div class="t" style="left:96.85px;top:643.72px;font-size:14.9px;font-weight:bold;color:#cccccc;letter-spacing:-0.297px">JAVA PROJECTS</div>
<div class="t" style="left:96.85px;top:675.52px;font-size:14.9px;font-weight:bold;color:#cccccc;transform:scaleX(1.0840);transform-origin:0 0">MAVEN</div>
<div class="t" style="left:375.69px;top:57.36px;font-size:18.72px;font-weight:normal;color:#9a9a9a;transform:scaleX(0.9290);transform-origin:0 0">style.css</div>
<div class="t" style="left:548.69px;top:57.36px;font-size:18.72px;font-weight:normal;color:#9a9a9a;letter-spacing:0.153px">index.html</div>
<div class="t" style="left:722.69px;top:57.36px;font-size:18.72px;font-weight:normal;color:#ffffff;letter-spacing:0.038px">hakkimizda.html</div>
<div class="t" style="left:944.69px;top:57.36px;font-size:18.72px;font-weight:normal;color:#9a9a9a;letter-spacing:0.245px">iletisim.html</div>
<div class="t" style="left:384.69px;top:98.86px;font-size:18.72px;font-weight:normal;color:#a9a9a9;letter-spacing:0.038px">hakkimizda.html</div>
<div class="t" style="left:45.31px;top:704.66px;font-size:17.28px;font-weight:normal;color:#fff;">0</div>
<div class="t" style="left:84.01px;top:704.66px;font-size:17.28px;font-weight:normal;color:#fff;">0</div>
<div class="t" style="left:399.81px;top:704.66px;font-size:17.28px;font-weight:normal;color:#fff;transform:scaleX(0.9587);transform-origin:0 0">Ln 16, Col 57</div>
<div class="t" style="left:521.51px;top:704.66px;font-size:17.28px;font-weight:normal;color:#fff;transform:scaleX(0.9138);transform-origin:0 0">Spaces: 4</div>
<div class="t" style="left:614.91px;top:704.66px;font-size:17.28px;font-weight:normal;color:#fff;transform:scaleX(0.9316);transform-origin:0 0">UTF-8</div>
<div class="t" style="left:683.01px;top:704.66px;font-size:17.28px;font-weight:normal;color:#fff;transform:scaleX(0.8422);transform-origin:0 0">CRLF</div>
<div class="t" style="left:744.21px;top:704.66px;font-size:17.28px;font-weight:normal;color:#fff;transform:scaleX(0.9314);transform-origin:0 0">HTML</div>
<div class="t" style="left:837.81px;top:704.66px;font-size:17.28px;font-weight:normal;color:#fff;transform:scaleX(0.9527);transform-origin:0 0">Port : 5500</div>
<div class="t" style="left:941.71px;top:704.66px;font-size:17.28px;font-weight:normal;color:#fff;transform:scaleX(0.9311);transform-origin:0 0">Dart</div>
<div class="t" style="left:977.71px;top:704.66px;font-size:17.28px;font-weight:normal;color:#fff;transform:scaleX(0.9140);transform-origin:0 0">from</div>
<div class="t" style="left:1014.91px;top:704.66px;font-size:17.28px;font-weight:normal;color:#fff;transform:scaleX(1.0510);transform-origin:0 0">Flutter:</div>
<div class="t" style="left:1077.81px;top:704.66px;font-size:17.28px;font-weight:normal;color:#fff;transform:scaleX(0.9531);transform-origin:0 0">1.21.0-1.0.pre</div>
<div class="t" style="left:1204.11px;top:704.66px;font-size:17.28px;font-weight:normal;color:#fff;letter-spacing:-0.126px">Prettier</div>
</body>
</html>
